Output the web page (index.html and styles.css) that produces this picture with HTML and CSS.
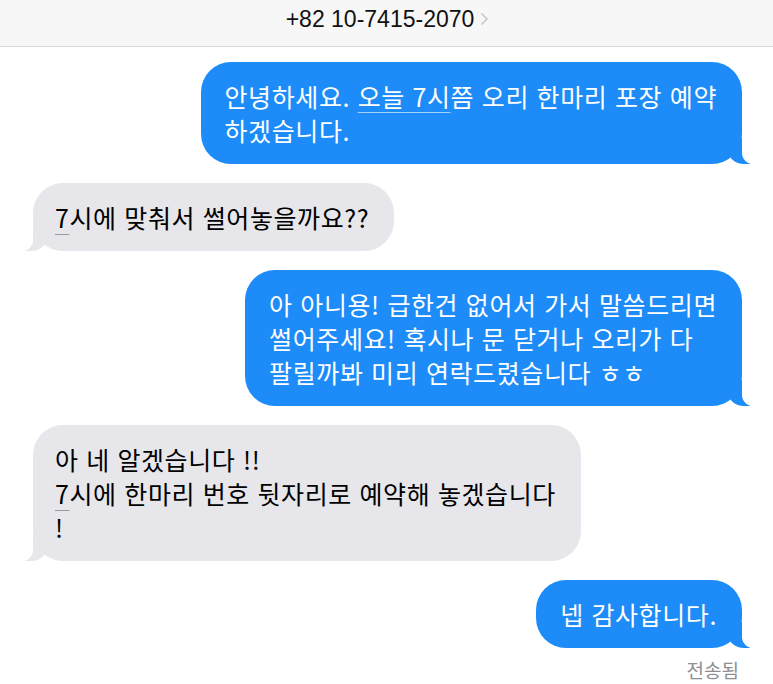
FILE: index.html
```html
<!DOCTYPE html>
<html lang="ko">
<head>
    <meta charset="UTF-8">
    <meta name="viewport" content="width=device-width, initial-scale=1.0">
    <title>+82 10-7415-2070</title>
    <link rel="stylesheet" href="styles.css">
</head>
<body>
    <header class="chat-header">
        <span class="contact">+82 10-7415-2070</span>
        <svg class="chevron" width="9" height="14" viewBox="0 0 9 14">
            <polyline points="1.5,1.5 7,7 1.5,12.5" fill="none" stroke="#c7c7cc" stroke-width="1.6"/>
        </svg>
    </header>

    <main class="thread">
        <div class="bubble sent">안녕하세요. <span class="link">오늘 7시</span>쯤 오리 한마리 포장 예약<br>하겠습니다.</div>

        <div class="bubble received"><span class="num">7</span>시에 맞춰서 썰어놓을까요??</div>

        <div class="bubble sent">아 아니용! 급한건 없어서 가서 말씀드리면<br>썰어주세요! 혹시나 문 닫거나 오리가 다<br>팔릴까봐 미리 연락드렸습니다 ㅎㅎ</div>

        <div class="bubble received">아 네 알겠습니다 !!<br><span class="num">7</span>시에 한마리 번호 뒷자리로 예약해 놓겠습니다<br>!</div>

        <div class="bubble sent">넵 감사합니다.</div>

        <div class="status">전송됨</div>
    </main>
</body>
</html>
```

FILE: styles.css
```css
:root {
    --blue: #1d8cf8;
    --grey: #e6e6eb;
    --muted: #8e8e93;
}

* {
    margin: 0;
    padding: 0;
    box-sizing: border-box;
}

body {
    background: #fff;
    font-family: "Noto Sans CJK KR", "Noto Sans", sans-serif;
    width: 773px;
    height: 684px;
    overflow: hidden;
}

.chat-header {
    height: 47px;
    background: #f7f7f7;
    border-bottom: 1px solid #d9d9d9;
    display: flex;
    justify-content: center;
    align-items: flex-start;
    gap: 6px;
    padding-left: 2px;
}

.contact {
    font-family: "Liberation Sans", Arial, sans-serif;
    font-size: 23px;
    line-height: 38px;
    color: #111;
}

.chevron {
    margin-top: 12px;
}

.thread {
    display: flex;
    flex-direction: column;
    gap: 19px;
    padding: 15px 31px 0 33px;
}

.bubble {
    position: relative;
    font-size: 25px;
    line-height: 34px;
    padding: 17px 25px 17px 24px;
    border-radius: 30px;
    white-space: nowrap;
    width: fit-content;
    letter-spacing: 0.6px;
}

.sent {
    align-self: flex-end;
    background: var(--blue);
    color: #fff;
}

.received {
    align-self: flex-start;
    background: var(--grey);
    color: #000;
    padding-left: 22px;
}

/* tails */
.bubble::before,
.bubble::after {
    content: "";
    position: absolute;
    bottom: 0;
    height: 26px;
}

.sent::before {
    right: -8px;
    width: 22px;
    background: var(--blue);
    border-bottom-left-radius: 16px 14px;
}

.sent::after {
    right: -26px;
    width: 26px;
    background: #fff;
    border-bottom-left-radius: 11px;
}

.received::before {
    left: -8px;
    width: 22px;
    background: var(--grey);
    border-bottom-right-radius: 16px 14px;
}

.received::after {
    left: -26px;
    width: 26px;
    background: #fff;
    border-bottom-right-radius: 11px;
}

.link {
    text-decoration: underline;
    text-decoration-color: rgba(255, 255, 255, 0.6);
    text-decoration-thickness: 1px;
    text-underline-offset: 5px;
}

.num {
    text-decoration: underline;
    text-decoration-color: #9a9aa0;
    text-decoration-thickness: 1px;
    text-underline-offset: 6px;
}

.status {
    align-self: flex-end;
    margin-top: -10px;
    margin-right: 3px;
    font-size: 19px;
    line-height: 26px;
    color: var(--muted);
}
```
